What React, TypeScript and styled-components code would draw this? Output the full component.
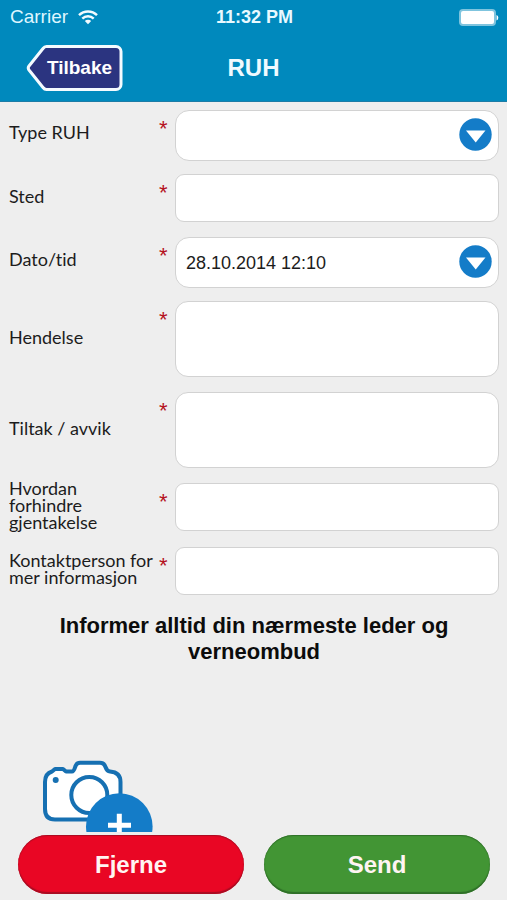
import React from "react";
import styled, { createGlobalStyle } from "styled-components";

const sans = `"Liberation Sans", Arial, sans-serif`;
const blue = "#147cc8";

const GlobalStyle = createGlobalStyle`
  *, *::before, *::after { box-sizing: border-box; }
  body { margin: 0; background: #eee; font-family: ${sans}; color: #1c1c1c; }
  button, input, select, textarea { font: inherit; color: inherit; }
`;

const Screen = styled.div`
  display: flex;
  flex-direction: column;
  min-height: 100vh;
`;

const Header = styled.header`
  background: #0089bd;
  color: #fff;
  border-bottom: 1px solid #1c7ca6;
`;

const Bar = styled.div`
  display: grid;
  grid-template-columns: 1fr auto 1fr;
  align-items: center;
`;

const StatusBar = styled(Bar)`
  height: 34px;
  padding: 0 8px 0 10px;
`;

const Carrier = styled.span`
  display: flex;
  align-items: center;
  gap: 10px;
  font-size: 19px;
  color: #dff6ff;
`;

const Clock = styled.span`
  font-size: 18px;
  font-weight: bold;
  color: #e9f9ff;
`;

const Battery = styled.svg`
  justify-self: end;
`;

const NavBar = styled(Bar)`
  height: 67px;
  padding: 0 26px;
`;

const BackButton = styled.button`
  position: relative;
  justify-self: start;
  width: 97px;
  height: 48px;
  padding: 0 0 0 10px;
  border: 0;
  background: none;
  color: #fff;
  font-size: 19px;
  font-weight: bold;
  cursor: pointer;
`;

const BackShape = styled.svg`
  position: absolute;
  inset: 0;
`;

const BackText = styled.span`
  position: relative;
`;

const Title = styled.h1`
  margin: 0;
  font-size: 24px;
  line-height: 28px;
  color: #effaff;
`;

const Main = styled.main`
  flex: 1;
  display: flex;
  flex-direction: column;
  padding: 8px 8px 0 9px;
`;

const Form = styled.form`
  display: flex;
  flex-direction: column;
  gap: 13px;
`;

const Row = styled.div`
  display: grid;
  grid-template-columns: 150px 10px minmax(0, 1fr);
`;

const Label = styled.label`
  align-self: center;
  margin: -3px 0 3px;
  font-family: Lato, sans-serif;
  font-size: 18px;
  font-variant-ligatures: none;
  line-height: 17px;
  white-space: pre;
`;

const Required = styled.span`
  padding-top: 7px;
  font-size: 22px;
  line-height: 24px;
  color: #b5121f;
`;

const Cell = styled.div<{ $height: number }>`
  display: flex;
  align-items: flex-start;
  height: ${(p) => p.$height}px;
  margin-left: 6px;
`;

const TextInput = styled.input`
  width: 100%;
  height: 48px;
  padding: 0 10px;
  border: 1px solid #d2d2d2;
  border-radius: 9px;
  background: #fff;
  font-size: 18px;
`;

const TextArea = styled.textarea`
  display: block;
  width: 100%;
  height: 76px;
  padding: 8px 10px;
  border: 1px solid #d2d2d2;
  border-radius: 13px;
  background: #fff;
  font-size: 18px;
  resize: none;
`;

const SelectBox = styled.div`
  position: relative;
  width: 100%;
`;

const Select = styled.select`
  display: block;
  width: 100%;
  height: 51px;
  padding: 0 48px 0 10px;
  appearance: none;
  border: 1px solid #d2d2d2;
  border-radius: 14px;
  background: #fff;
  font-size: 18px;
`;

const SelectArrow = styled.svg`
  position: absolute;
  right: 7px;
  top: 8px;
  pointer-events: none;
`;

const Notice = styled.p`
  max-width: 420px;
  margin: 16px auto 0;
  text-align: center;
  font-size: 22px;
  font-weight: bold;
  line-height: 26px;
  color: #0c0c0c;
`;

const PhotoButton = styled.button`
  align-self: flex-start;
  height: 72px;
  margin: auto 0 0 33px;
  padding: 0;
  border: 0;
  background: none;
  overflow: hidden;
  cursor: pointer;

  svg { display: block; }
`;

const Footer = styled.footer`
  display: flex;
  gap: 20px;
  padding: 3px 17px 6px 18px;
`;

const ActionButton = styled.button<{ $color: string; $edge: string }>`
  flex: 1;
  height: 59px;
  padding: 0;
  border: 0;
  border-radius: 30px;
  background: ${(p) => p.$color};
  box-shadow: inset 0 -2px 1px ${(p) => p.$edge}, inset 0 1px 1px ${(p) => p.$edge};
  color: #fff4f2;
  font-size: 24px;
  font-weight: bold;
  cursor: pointer;
`;

type Field = {
  id: string;
  label: string;
  kind: "select" | "text" | "area";
  value?: string;
};

const fields: Field[] = [
  { id: "type", label: "Type RUH", kind: "select", value: "" },
  { id: "sted", label: "Sted", kind: "text" },
  { id: "dato", label: "Dato/tid", kind: "select", value: "28.10.2014 12:10" },
  { id: "hendelse", label: "Hendelse", kind: "area" },
  { id: "tiltak", label: "Tiltak / avvik", kind: "area" },
  { id: "forhindre", label: "Hvordan\nforhindre\ngjentakelse", kind: "text" },
  { id: "kontakt", label: "Kontaktperson for\nmer informasjon", kind: "text" },
];

const cellHeights = { select: 51, text: 50, area: 78 };

function Control({ field }: { field: Field }) {
  if (field.kind === "select") {
    return (
      <SelectBox>
        <Select id={field.id} defaultValue={field.value} required>
          <option value={field.value}>{field.value}</option>
        </Select>
        <SelectArrow width="33" height="33" viewBox="0 0 33 33" aria-hidden="true">
          <circle cx="16.5" cy="16.5" r="16.2" fill={blue} />
          <path d="M7 12.5h19.5L16.7 24.5z" fill="#fff" />
        </SelectArrow>
      </SelectBox>
    );
  }
  if (field.kind === "area") return <TextArea id={field.id} required />;
  return <TextInput id={field.id} type="text" required />;
}

function WifiIcon() {
  return (
    <svg width="20" height="15" viewBox="0 0 20 15" aria-hidden="true">
      <g fill="none" stroke="#f2fbff" strokeWidth="2.4">
        <path d="M1 5.2a12.8 12.8 0 0 1 18 0" />
        <path d="M4.3 8.6a8.1 8.1 0 0 1 11.4 0" />
      </g>
      <path d="M6.8 11a4.6 4.6 0 0 1 6.4 0L10 14.3z" fill="#f2fbff" />
    </svg>
  );
}

function CameraIcon() {
  return (
    <svg width="112" height="72" viewBox="0 0 112 72" aria-hidden="true">
      <path
        d="M3 22C3 16 5 13 10 11.500L13 9H21L24 11.500H30C32 11.500 32.500 9 33.500 6C34.500 3.500 36 2.700 38 2.700H58C61 2.700 62.500 4 63.500 7C64.500 10 65.500 11.300 68 11.500C75 12 78.500 15 78.500 22V49C78.500 56 75 59.500 68 59.500H13C6.500 59.500 3 56 3 49Z"
        fill="#fff"
        stroke="#1670b2"
        strokeWidth="4"
        strokeLinejoin="round"
      />
      <circle cx="13.700" cy="20" r="3" fill="#1670b2" />
      <circle cx="47.300" cy="35" r="18" fill="#fff" stroke="#1670b2" strokeWidth="4" />
      <circle cx="77.300" cy="66.500" r="33.300" fill={blue} />
      <path d="M66 65.300H89M77.300 53.700V77" stroke="#fff" strokeWidth="5" />
    </svg>
  );
}

export default function App() {
  return (
    <Screen>
      <GlobalStyle />
      <Header>
        <StatusBar>
          <Carrier>
            Carrier
            <WifiIcon />
          </Carrier>
          <Clock>11:32 PM</Clock>
          <Battery width="40" height="17" viewBox="0 0 40 17" aria-hidden="true">
            <rect x="1" y="1" width="35" height="15" rx="3" fill="#fff" stroke="#7fc4de" strokeWidth="2" />
            <path d="M37.500 6a3 3 0 0 1 0 5.500z" fill="#fff" />
          </Battery>
        </StatusBar>
        <NavBar>
          <BackButton type="button">
            <BackShape width="97" height="48" viewBox="0 0 97 48" aria-hidden="true">
              <path
                d="M20.500 2.500H90a5 5 0 0 1 5 5V40.500a5 5 0 0 1-5 5H20.500Q18.500 45.500 17 43.500L3 26Q1.500 24 3 22L17 4.500Q18.500 2.500 20.500 2.500Z"
                fill="#2b3480"
                stroke="#f4fbff"
                strokeWidth="3"
                strokeLinejoin="round"
              />
            </BackShape>
            <BackText>Tilbake</BackText>
          </BackButton>
          <Title>RUH</Title>
        </NavBar>
      </Header>
      <Main>
        <Form id="ruh">
          {fields.map((field) => (
            <Row key={field.id}>
              <Label htmlFor={field.id}>{field.label}</Label>
              <Required aria-hidden="true">*</Required>
              <Cell $height={cellHeights[field.kind]}>
                <Control field={field} />
              </Cell>
            </Row>
          ))}
        </Form>
        <Notice>Informer alltid din nærmeste leder og verneombud</Notice>
        <PhotoButton type="button" aria-label="Legg til bilde">
          <CameraIcon />
        </PhotoButton>
      </Main>
      <Footer>
        <ActionButton type="reset" form="ruh" $color="#e90624" $edge="#a80c22">
          Fjerne
        </ActionButton>
        <ActionButton type="submit" form="ruh" $color="#429534" $edge="#2f6f28">
          Send
        </ActionButton>
      </Footer>
    </Screen>
  );
}
